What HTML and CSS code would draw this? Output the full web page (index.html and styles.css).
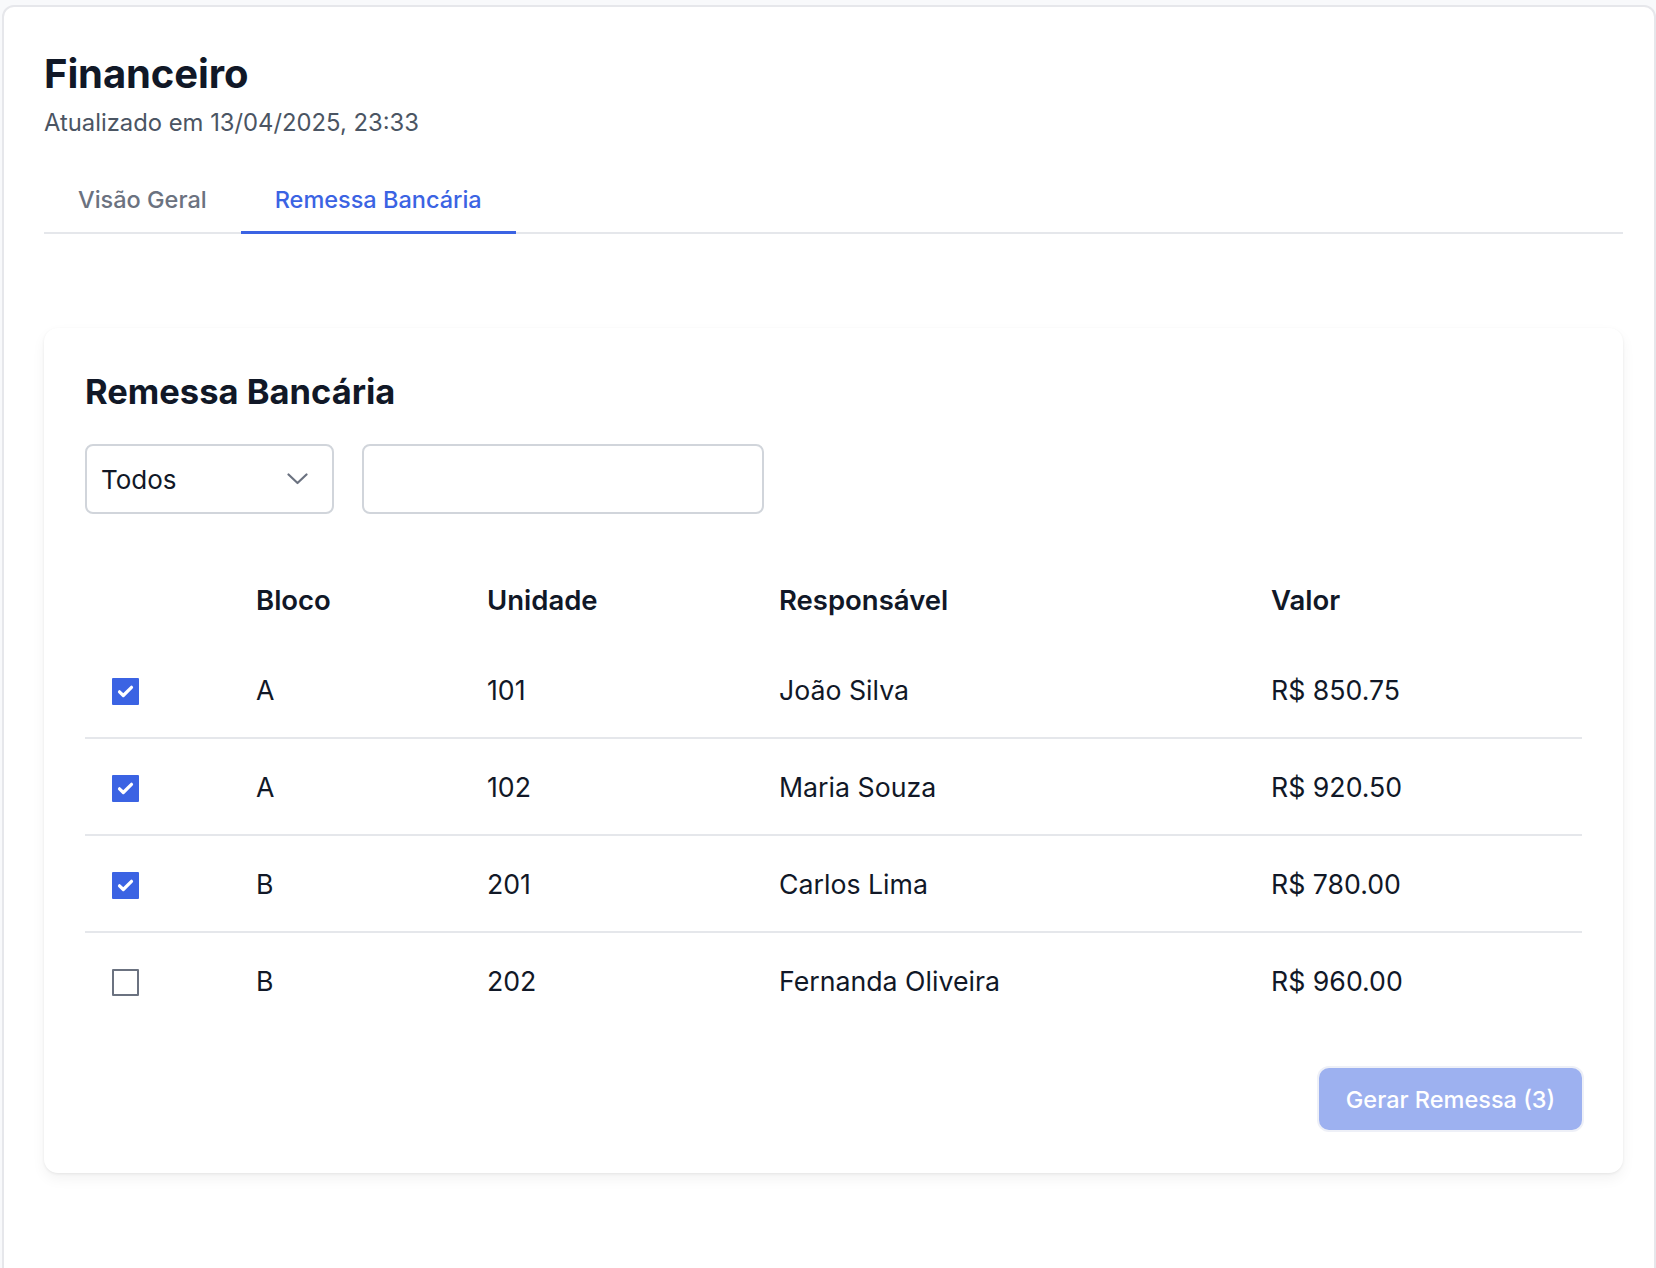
FILE: index.html
```html
<!DOCTYPE html>
<html lang="pt-BR">
<head>
<meta charset="utf-8">
<title>Financeiro</title>
<link rel="stylesheet" href="styles.css">
</head>
<body>
<div class="panel">
  <h1 class="title">Financeiro</h1>
  <p class="updated">Atualizado em 13/04/2025, 23:33</p>
  <nav class="tabs">
    <div class="tab">Visão Geral</div>
    <div class="tab active">Remessa Bancária</div>
  </nav>
  <section class="card">
    <h2 class="card-title">Remessa Bancária</h2>
    <div class="filters">
      <div class="select">
        <span>Todos</span>
        <svg class="chevron" width="21" height="12" viewBox="0 0 21 12"><path d="M1.5 1.5 L10.5 10 L19.5 1.5" fill="none" stroke="#6b7280" stroke-width="2.2" stroke-linecap="round" stroke-linejoin="round"/></svg>
      </div>
      <div class="search"></div>
    </div>
    <table class="grid">
      <colgroup>
        <col class="c-check"><col class="c-bloco"><col class="c-unid"><col class="c-resp"><col class="c-valor">
      </colgroup>
      <thead>
        <tr><th></th><th>Bloco</th><th>Unidade</th><th>Responsável</th><th>Valor</th></tr>
      </thead>
      <tbody>
        <tr>
          <td><span class="box checked"><svg width="27" height="27" viewBox="0 0 27 27"><path d="M7.5 13.8 L11.3 17.5 L19.5 9.3" fill="none" stroke="#fff" stroke-width="3.2" stroke-linecap="round" stroke-linejoin="round"/></svg></span></td>
          <td>A</td><td>101</td><td>João Silva</td><td>R$ 850.75</td>
        </tr>
        <tr>
          <td><span class="box checked"><svg width="27" height="27" viewBox="0 0 27 27"><path d="M7.5 13.8 L11.3 17.5 L19.5 9.3" fill="none" stroke="#fff" stroke-width="3.2" stroke-linecap="round" stroke-linejoin="round"/></svg></span></td>
          <td>A</td><td>102</td><td>Maria Souza</td><td>R$ 920.50</td>
        </tr>
        <tr>
          <td><span class="box checked"><svg width="27" height="27" viewBox="0 0 27 27"><path d="M7.5 13.8 L11.3 17.5 L19.5 9.3" fill="none" stroke="#fff" stroke-width="3.2" stroke-linecap="round" stroke-linejoin="round"/></svg></span></td>
          <td>B</td><td>201</td><td>Carlos Lima</td><td>R$ 780.00</td>
        </tr>
        <tr class="last">
          <td><span class="box"></span></td>
          <td>B</td><td>202</td><td>Fernanda Oliveira</td><td>R$ 960.00</td>
        </tr>
      </tbody>
    </table>
    <div class="actions">
      <button class="generate">Gerar Remessa (3)</button>
    </div>
  </section>
</div>
</body>
</html>
```

FILE: styles.css
```css
html, body {
  margin: 0;
  padding: 0;
  overflow: hidden;
}
body {
  background: #f8f9fb;
  font-family: Inter, "Noto Sans", sans-serif;
  color: #111827;
}
.panel {
  margin: 5px 0 0 2px;
  height: 1300px;
  box-sizing: border-box;
  background: #fff;
  border: 2px solid #e6e7eb;
  border-radius: 12px;
  padding: 43px 31px 0 40px;
}
.title {
  margin: 0;
  font-size: 40px;
  line-height: 48px;
  font-weight: 700;
  letter-spacing: -0.1px;
  color: #111827;
}
.updated {
  margin: 8px 0 0;
  font-size: 23.8px;
  line-height: 34px;
  color: #4b5563;
}
.tabs {
  margin-top: 28px;
  display: flex;
  border-bottom: 2px solid #e5e7eb;
}
.tab {
  padding: 15px 34px 14px;
  font-size: 23.5px;
  line-height: 34px;
  font-weight: 500;
  color: #6b7280;
  border-bottom: 3px solid transparent;
  margin-bottom: -2px;
}
.tab.active {
  color: #3b63e3;
  border-bottom-color: #3b63e3;
}
.card {
  margin-top: 94px;
  background: #fff;
  border-radius: 14px;
  padding: 44px 41px 43px;
  box-shadow: 0 1px 3px rgba(0, 0, 0, 0.07), 0 6px 14px rgba(0, 0, 0, 0.05);
}
.card-title {
  margin: 0;
  font-size: 34.5px;
  line-height: 40px;
  font-weight: 700;
  color: #111827;
}
.filters {
  margin-top: 32px;
  display: flex;
  gap: 28px;
}
.select {
  width: 249px;
  height: 70px;
  box-sizing: border-box;
  border: 2px solid #d1d5db;
  border-radius: 8px;
  padding: 0 24px 0 14px;
  display: flex;
  align-items: center;
  justify-content: space-between;
  font-size: 26px;
  color: #111827;
}
.chevron {
  display: block;
}
.search {
  width: 402px;
  height: 70px;
  box-sizing: border-box;
  border: 2px solid #d1d5db;
  border-radius: 8px;
}
.grid {
  margin-top: 43px;
  width: 100%;
  border-collapse: collapse;
  table-layout: fixed;
  font-size: 26.7px;
}
.c-check { width: 171px; }
.c-bloco { width: 231px; }
.c-unid { width: 292px; }
.c-resp { width: 492px; }
.grid th {
  height: 85px;
  padding: 0;
  text-align: left;
  font-size: 27.5px;
  font-weight: 600;
  vertical-align: middle;
}
.grid td {
  height: 95px;
  padding: 0;
  vertical-align: middle;
  border-bottom: 2px solid #e5e7eb;
}
.grid tr.last td {
  border-bottom: none;
  height: 95px;
}
.box {
  display: block;
  width: 27px;
  height: 27px;
  box-sizing: border-box;
  margin: 4px 0 0 27px;
  border: 2px solid #6b7280;
  border-radius: 1px;
  background: #fff;
}
.box.checked {
  border: none;
  background: #3b63e3;
}
.box svg {
  display: block;
}
.actions {
  margin-top: 40px;
  display: flex;
  justify-content: flex-end;
}
.generate {
  width: 263px;
  height: 62px;
  border: none;
  border-radius: 10px;
  background: #9db1f0;
  color: #fff;
  font-family: Inter, "Noto Sans", sans-serif;
  font-size: 23.5px;
  font-weight: 500;
  box-shadow: 0 0 0 2px #eef0f7;
}
```
